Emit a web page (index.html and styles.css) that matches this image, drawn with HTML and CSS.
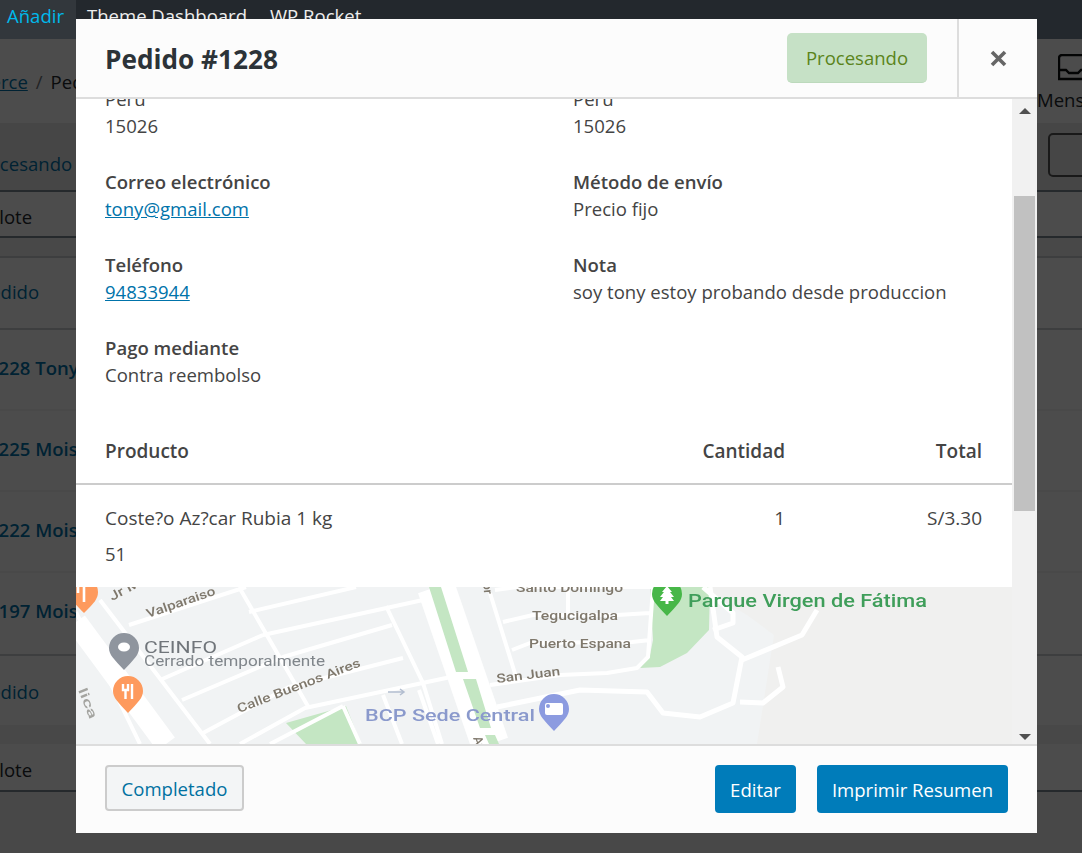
FILE: index.html
```html
<!DOCTYPE html>
<html lang="es">
<head>
<meta charset="utf-8">
<title>Pedido #1228</title>
<link rel="stylesheet" href="styles.css">
</head>
<body>
<header class="adminbar">
  <a class="adminbar-add">Añadir</a>
  <a class="adminbar-link">Theme Dashboard</a>
  <a class="adminbar-link">WP Rocket</a>
</header>
<main class="page">
  <div class="crumbs">
    <p class="crumb-text"><a class="link">WooCommerce</a><span class="slash">/</span>Pedidos</p>
    <div class="inbox">
      <svg class="inbox-icon" width="30" height="27" viewBox="0 0 30 27"><path d="M4 1h26v24H1V4a3 3 0 0 1 3-3zM1 16h7l3 3h9l3-3h7" fill="none" stroke="#0c0e10" stroke-width="2.4"/></svg>
      <span class="inbox-label">Mensajes</span>
    </div>
  </div>
  <div class="tabs">
    <a class="link tab-status">Procesando (1)</a>
    <span class="tab-button"></span>
  </div>
  <div class="bulk"><span class="bulk-text">Acciones en lote</span></div>
  <div class="gap"></div>
  <div class="row row-head"><a class="link head-pedido">Pedido</a></div>
  <div class="row row-order"><a class="link order">#1228 Tony Perez</a></div>
  <div class="row row-order"><a class="link order">#1225 Moises Ruiz</a></div>
  <div class="row row-order"><a class="link order">#1222 Moises Ruiz</a></div>
  <div class="row row-order row-order-last"><a class="link order">#1197 Moises Ruiz</a></div>
  <div class="row row-foot"><a class="link head-pedido">Pedido</a></div>
  <div class="gap gap-low"></div>
  <div class="bulk bulk-low"><span class="bulk-text">Acciones en lote</span></div>
</main>
<div class="backdrop"></div>
<section class="modal">
  <header class="modal-head">
    <h1 class="modal-title">Pedido #1228</h1>
    <span class="chip">Procesando</span>
    <button class="close" aria-label="Cerrar"><svg width="17" height="17" viewBox="0 0 17 17"><path d="M2 2l13 13M15 2L2 15" stroke="#666" stroke-width="3.6" fill="none"/></svg></button>
  </header>
  <div class="modal-body">
    <div class="scroller">
      <div class="details">
        <div class="details-grid">
          <div class="field"><div>Peru</div><div>15026</div></div>
          <div class="field"><div>Peru</div><div>15026</div></div>
          <div class="field"><strong>Correo electrónico</strong><a class="mail">tony@gmail.com</a></div>
          <div class="field"><strong>Método de envío</strong><div>Precio fijo</div></div>
          <div class="field"><strong>Teléfono</strong><a class="mail">94833944</a></div>
          <div class="field"><strong>Nota</strong><div>soy tony estoy probando desde produccion</div></div>
          <div class="field"><strong>Pago mediante</strong><div>Contra reembolso</div></div>
        </div>
        <div class="items items-head"><strong>Producto</strong><strong class="num">Cantidad</strong><strong class="num">Total</strong></div>
        <div class="items items-row"><span>Coste?o Az?car Rubia 1 kg</span><span class="num">1</span><span class="num">S/3.30</span></div>
        <div class="sku">51</div>
      </div>
    </div>
    <div class="scrollbar">
      <span class="arrow arrow-up"></span>
      <span class="thumb"></span>
      <span class="arrow arrow-down"></span>
    </div>
    <svg class="map" width="961" height="157" viewBox="76 587 961 157">
      <rect x="76" y="587" width="961" height="157" fill="#f1f3f4"/>
      <path d="M700 587L747 615 774 635 757 744H1037V587z" fill="#f0f0ef"/>
      <path d="M286 723L346 706 361 744H306zM650 587H710L709 630 687 653 660 667 640 668 650 655 653 640z" fill="#c4e6c3"/>
      <g class="streets">
        <path d="M76 612L140 744M100 600L210 744M129 625L246 587M249 612L356 587M263 635L423 600M160 680L263 635M182 700L283 657 392 625M203 733L289 687 403 658M240 744L305 708 446 678 470 670M270 744L343 706M239 587L309 708M386 606L423 683 442 744M343 706L360 744M383 695L402 744M419 690L438 744M495 590L517 587H653M490 593L517 680M503 622L533 615 617 615 650 613M512 650L530 643 632 642 650 640M490 685L560 675 607 673 637 668 648 657 653 587M568 587V613" stroke-width="4"/>
        <path d="M497 707L580 690 647 692 663 713 700 717 733 703 742 657 717 637 710 587M742 660L802 635 817 610M740 702L763 703 783 687 778 667M713 630L733 623 733 613 703 587" stroke-width="5"/>
        <path d="M76 622L166 744" stroke-width="22"/>
        <path d="M436 587L490 744" stroke-width="38"/>
      </g>
      <path d="M429 587H441L468 672 456 672zM463 679L476 679 491 728 480 728zM485 735H495L499 744H489z" fill="#c4e6c3"/>
      <path d="M388 692H404M400 689L404 692 400 695" stroke="#b3bed0" stroke-width="1.5" fill="none"/>
      <g class="pin"><path fill="#fe9a5d" d="M84 613c-10-10-14-14-14-21a14 14 0 0 1 28 0c0 7-4 11-14 21z"/><path d="M78 584v9M84 584v18" stroke="#fff" stroke-width="2.6"/></g>
      <path fill="#8f959e" d="M124 670c-10-11-15-15-15-22a15 15 0 0 1 30 0c0 7-5 11-15 22z"/><ellipse cx="124" cy="647" rx="6" ry="4.5" fill="#fff"/>
      <path fill="#fe9a5d" d="M128 713c-10-11-15-15-15-22a15 15 0 0 1 30 0c0 7-5 11-15 22z"/><path d="M123 684v6h5v-6M125.500 690v9M132 684v15" stroke="#fff" stroke-width="2.400" fill="none"/>
      <path fill="#47b748" d="M667 616c-10-11-15-15-15-22a15 15 0 0 1 30 0c0 7-5 11-15 22z"/><path fill="#fff" d="M667 586l5 6h-2l4 5h-3l3 4h-14l3-4h-3l4-5h-2zM665.500 600h3v4h-3z"/>
      <path fill="#8c9be0" d="M554 731c-10-11-15-15-15-22a15 15 0 0 1 30 0c0 7-5 11-15 22z"/><rect x="545" y="703" width="18" height="12" rx="2" fill="#fff"/><circle cx="548" cy="706" r="2" fill="#8c9be0"/>
      <text class="t-road" x="516" y="592" textLength="107" lengthAdjust="spacingAndGlyphs">Santo Domingo</text>
      <text class="t-road" x="532" y="620" textLength="86" lengthAdjust="spacingAndGlyphs">Tegucigalpa</text>
      <text class="t-road" x="529" y="648" textLength="102" lengthAdjust="spacingAndGlyphs">Puerto Espana</text>
      <text class="t-road" transform="rotate(-7 497 683)" x="497" y="683" textLength="64" lengthAdjust="spacingAndGlyphs">San Juan</text>
      <text class="t-road" transform="rotate(-19 148 618)" x="148" y="618" textLength="72" lengthAdjust="spacingAndGlyphs">Valparaiso</text>
      <text class="t-road" transform="rotate(-28 112 601)" x="112" y="601" textLength="42" lengthAdjust="spacingAndGlyphs">Jr Ma</text>
      <text class="t-road" transform="rotate(-21 239 713)" x="239" y="713" textLength="131" lengthAdjust="spacingAndGlyphs">Calle Buenos Aires</text>
      <text class="t-road" transform="rotate(84 483 583)" x="483" y="583">or</text>
      <text class="t-road t-faint" transform="rotate(68 78 690)" x="78" y="690" textLength="32" lengthAdjust="spacingAndGlyphs">lica</text>
      <text class="t-road" transform="rotate(70 473 738)" x="473" y="738">Av</text>
      <text class="t-place" x="144" y="653" textLength="73" lengthAdjust="spacingAndGlyphs">CEINFO</text>
      <text class="t-sub" x="144" y="666" textLength="181" lengthAdjust="spacingAndGlyphs">Cerrado temporalmente</text>
      <text class="t-park" x="688" y="607" textLength="239" lengthAdjust="spacingAndGlyphs">Parque Virgen de Fátima</text>
      <text class="t-bank" x="365" y="721" textLength="170" lengthAdjust="spacingAndGlyphs">BCP Sede Central</text>
    </svg>
  </div>
  <footer class="modal-foot">
    <button class="btn btn-ghost">Completado</button>
    <div class="foot-actions">
      <button class="btn btn-main">Editar</button>
      <button class="btn btn-main">Imprimir Resumen</button>
    </div>
  </footer>
</section>
</body>
</html>
```

FILE: styles.css
```css
* { box-sizing: border-box; }
html, body { margin: 0; height: 853px; overflow: hidden; }
body {
  position: relative;
  width: 1082px;
  background: #f1f1f1;
  font: 18.55px/27px "Open Sans", "Noto Sans", sans-serif;
  color: #23282d;
}
button { font: inherit; cursor: pointer; }
h1, p { margin: 0; }

.adminbar {
  position: relative;
  z-index: 2;
  display: flex;
  height: 39px;
  background: #23282d;
  color: #eee;
  white-space: nowrap;
}
.adminbar-add {
  width: 76px;
  padding: 2px 0 0 7px;
  background: #32373c;
  color: #00b9eb;
}
.adminbar-link { padding: 2px 0 0 11px; margin-right: 12px; }

.link { color: #0073aa; text-decoration: none; }
.page { white-space: nowrap; }
.crumbs {
  display: flex;
  justify-content: space-between;
  height: 84px;
  background: #fff;
}
.crumb-text { margin: 29px 0 0 -106px; }
.crumb-text .link { text-decoration: underline; }
.slash { margin: 0 8px; color: #72777c; }
.inbox { display: flex; flex-direction: column; width: 45px; margin-top: 15px; }
.inbox-icon { margin-left: 21px; }
.inbox-label { margin-top: 5px; }

.tabs {
  display: flex;
  justify-content: space-between;
  height: 69px;
  background: #ececec;
  border-bottom: 2px solid #7e8993;
}
.tab-status { margin: 27px 0 0 -30px; }
.tab-button {
  width: 60px;
  height: 44px;
  margin: 10px -26px 0 0;
  border: 2px solid #555;
  border-radius: 5px;
}
.bulk {
  height: 46px;
  padding-top: 11px;
  background: #fff;
  border-bottom: 2px solid #7e8993;
}
.bulk-text { margin-left: -108px; }
.bulk-low { height: 48px; padding-top: 12px; border-bottom: 2px solid #7e8993; }
.gap { height: 18px; background: #f1f1f1; }
.gap-low { height: 19px; }
.row { background: #fff; border-top: 2px solid #ccd0d4; }
.row-head { height: 72px; padding-top: 20px; }
.row-order { height: 81px; padding-top: 24px; border-color: #f4f4f4; font-weight: 600; }
.row-head + .row-order { border-color: #ccd0d4; }
.row-order-last { height: 83px; }
.row-foot { height: 71px; padding-top: 22px; border-color: #ccd0d4; }
.head-pedido { margin-left: -21px; }
.order { display: block; margin-left: -24px; }

.backdrop { position: absolute; inset: 0; z-index: 1; background: rgba(0, 0, 0, .7); }

.modal {
  position: absolute;
  z-index: 3;
  left: 76px;
  top: 19px;
  width: 961px;
  height: 814px;
  display: flex;
  flex-direction: column;
  background: #fff;
  color: #444;
}
.modal-head {
  display: flex;
  align-items: stretch;
  height: 80px;
  padding-left: 29px;
  background: #fcfcfc;
  border-bottom: 2px solid #ddd;
}
.modal-title {
  flex: 1;
  align-self: center;
  padding-top: 2px;
  font-size: 26.2px;
  line-height: 34px;
  font-weight: 700;
  color: #2c3338;
}
.chip {
  align-self: flex-start;
  width: 140px;
  height: 50px;
  margin: 14px 30px 0 0;
  padding-top: 11px;
  text-align: center;
  background: #c6e1c6;
  border-bottom: 1px solid #bcd9bc;
  border-radius: 5px;
  color: #5b841b;
}
.close {
  width: 80px;
  height: 80px;
  margin-bottom: -2px;
  padding: 0 0 0 1px;
  background: none;
  border: 0;
  border-left: 2px solid #ddd;
}

.modal-body { position: relative; flex: 1; display: flex; flex-direction: column; overflow: hidden; }
.scroller { height: 488px; overflow: hidden; }
.details { width: 936px; height: 488px; background: #fff; overflow: hidden; }
.details-grid {
  display: grid;
  grid-template-columns: 468px 468px;
  margin-top: -14px;
  padding-left: 29px;
  row-gap: 29px;
}
.field { display: flex; flex-direction: column; align-items: flex-start; min-height: 54px; }
.field strong { font-weight: 600; }
.mail { color: #0073aa; text-decoration: underline; }
.items {
  display: grid;
  grid-template-columns: 1fr 200px 197px;
  padding: 0 30px 0 29px;
}
.items strong { font-size: 19px; font-weight: 600; }
.items-row { font-size: 19px; }
.num { text-align: right; }
.items-head { height: 50px; margin-top: 47px; padding-top: 3px; border-bottom: 2px solid #ccc; }
.items-row { margin-top: 20px; }
.sku { margin-top: 8px; padding-left: 29px; }
.map {
  display: block;
  flex: none;
  filter: blur(.4px);
}
.streets { fill: none; stroke: #fff; stroke-linecap: butt; stroke-linejoin: round; }
.t-road { font: 500 12.5px Roboto, sans-serif; fill: #7f786c; }
.t-faint { fill: #a4a4a0; }
.t-place { font: 17px Roboto, sans-serif; fill: #70757a; }
.t-sub { font: 14px Roboto, sans-serif; fill: #80868b; }
.t-park { font: 500 18px Roboto, sans-serif; fill: #3f9e5a; }
.t-bank { font: 500 17px Roboto, sans-serif; fill: #8a99cc; }

.scrollbar {
  position: absolute;
  z-index: 1;
  top: 0;
  right: 0;
  width: 25px;
  height: 645px;
  background: #f1f1f1;
}
.thumb { position: absolute; left: 2px; right: 2px; top: 97px; height: 315px; background: #c1c1c1; }
.arrow { position: absolute; left: 7px; border: 6px solid transparent; }
.arrow-up { top: 9px; border-bottom: 6px solid #505050; border-top: 0; }
.arrow-down { bottom: 4px; border-top: 6px solid #505050; border-bottom: 0; }

.modal-foot {
  display: flex;
  justify-content: space-between;
  align-items: flex-start;
  height: 89px;
  padding: 19px 29px 0;
  background: #fcfcfc;
  border-top: 2px solid #ddd;
}
.foot-actions { display: flex; gap: 21px; }
.btn { height: 48px; padding: 0 15px; border-radius: 4px; }
.btn-ghost {
  width: 139px;
  height: 46px;
  padding: 0;
  background: #f3f5f6;
  border: 2px solid #ccc;
  color: #0071a1;
}
.btn-main { background: #007cba; border: 0; color: #fff; }
```
